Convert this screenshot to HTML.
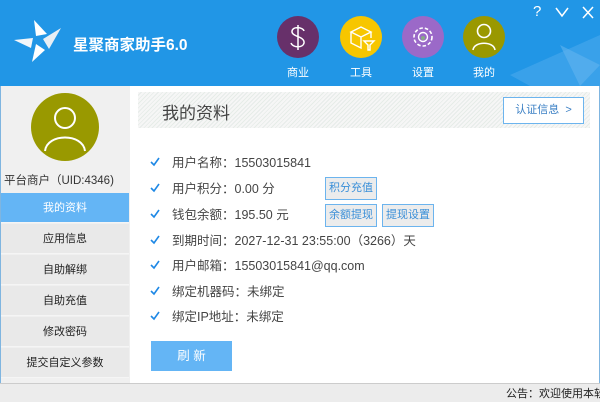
<!DOCTYPE html>
<html><head><meta charset="utf-8"><style>
*{margin:0;padding:0;box-sizing:border-box}
body{width:600px;height:402px;overflow:hidden;font-family:"Liberation Sans","Noto Sans CJK SC",sans-serif;background:#fff;position:relative}
.a{position:absolute}
.hdr{left:0;top:0;width:600px;height:86px;background:#2196e6}
.side{left:0;top:86px;width:130px;height:297px;background:#f0f0f0;border-left:1px solid #7fb5e0}
.mi{position:absolute;left:1px;width:128px;height:30px;line-height:30px;text-align:center;font-size:11px;color:#222;background:#e9e9e9;border-bottom:1px solid #f5f5f5}
.row{position:absolute;left:172px;font-size:12.5px;color:#444;height:20px;line-height:20px}
.ck{position:absolute;left:150px;width:10px;height:10px}
.btn{position:absolute;height:23px;line-height:21px;font-size:11px;color:#3a8fd8;border:1px solid #6cb4ee;background:#ececec;text-align:center}
.ic{position:absolute;top:16px;width:42px;height:42px;border-radius:50%}
.lb{position:absolute;top:64px;font-size:11px;color:#fff;width:50px;text-align:center}
</style></head><body>
<div class="a hdr"></div>
<svg class="a" style="left:500px;top:25px" width="100" height="61"><polygon points="10,50 100,10 100,61 30,61" fill="#4aa8ec" opacity=".6"/><polygon points="60,20 100,40 80,61" fill="#62b4ef" opacity=".6"/></svg>
<svg class="a" style="left:12px;top:18px" width="52" height="46"><polygon points="22,2 35,16 24,18" fill="#fff"/><polygon points="49,10 37,31 31,21" fill="#e8eef4"/><polygon points="20,44 24,26 33,32" fill="#fff"/><polygon points="2,22 21,20 19,30" fill="#f2f6fa"/></svg>
<div class="a" style="left:73px;top:33px;color:#fff;font-size:15.5px;font-weight:bold">星聚商家助手6.0</div>
<div class="ic" style="left:277px;background:#67306a"></div>
<svg class="a" style="left:277px;top:16px" width="42" height="42" fill="none" stroke="#fff" stroke-width="1.5"><path d="M27 15 C26 11 16 10 15 15 C14 21 28 20 27 27 C26 32 16 32 14 27 M21 9 V34"/></svg>
<div class="ic" style="left:340px;background:#f7c600"></div>
<svg class="a" style="left:348px;top:24px" width="28" height="28" fill="none" stroke="#fff" stroke-width="1.4"><path d="M3 8 L13 3 L23 8 L13 13 Z M3 8 V19 L13 24 V13 M23 8 V14"/><path d="M16 17 H26 L22 21 V26 H20 V21 Z"/></svg>
<div class="ic" style="left:402px;background:#9b69c8"></div>
<svg class="a" style="left:409px;top:23px" width="28" height="28"><circle cx="14" cy="14" r="9" fill="none" stroke="#fff" stroke-width="1.6" stroke-dasharray="3.5 2"/><circle cx="14" cy="14" r="4.5" fill="none" stroke="#fff" stroke-width="1.4"/><circle cx="14" cy="15" r="2" fill="#8a8"/></svg>
<div class="ic" style="left:463px;background:#9a9800"></div>
<svg class="a" style="left:470px;top:21px" width="28" height="32" fill="none" stroke="#fff" stroke-width="1.6"><circle cx="14" cy="10" r="6.5"/><path d="M3 29 C4 20 24 20 25 29"/></svg>
<div class="lb" style="left:273px">商业</div><div class="lb" style="left:336px">工具</div><div class="lb" style="left:398px">设置</div><div class="lb" style="left:459px">我的</div>
<div class="a" style="left:533px;top:3px;color:#fff;font-size:15px">?</div>
<svg class="a" style="left:554px;top:6px" width="44" height="14" stroke="#fff" stroke-width="1.5" fill="none"><path d="M2 2 L8 10 L14 2"/><path d="M29 1 L39 12 M39 1 L29 12"/></svg>
<div class="a side"></div>
<div class="a" style="left:31px;top:93px;width:68px;height:68px;border-radius:50%;background:#999900"></div>
<svg class="a" style="left:31px;top:93px" width="68" height="68" fill="none" stroke="#fff" stroke-width="2"><circle cx="34" cy="25" r="10"/><path d="M14 58 C16 40 52 40 54 58"/></svg>
<div class="a" style="left:4px;top:172px;font-size:11.5px;color:#333">平台商户（UID:4346)</div>
<div class="mi" style="top:193px;background:#64b5f5;color:#fff">我的资料</div>
<div class="mi" style="top:224px">应用信息</div>
<div class="mi" style="top:255px">自助解绑</div>
<div class="mi" style="top:286px">自助充值</div>
<div class="mi" style="top:317px">修改密码</div>
<div class="mi" style="top:348px">提交自定义参数</div>
<div class="a" style="left:138px;top:92px;width:452px;height:36px;background:repeating-linear-gradient(135deg,#f6f6f6 0 2px,#e6ece8 2px 3px)"></div>
<div class="a" style="left:162px;top:99px;font-size:17px;color:#444">我的资料</div>
<div class="a" style="left:503px;top:97px;width:81px;height:27px;background:#fff;border:1px solid #6cb4ee;font-size:11px;color:#3a7fc4;line-height:25px;text-align:center">认证信息 &nbsp;&gt;</div>
<svg class="a" style="left:0;top:0" width="170" height="330" fill="none" stroke="#1e88e5" stroke-width="1.6"><path d="M151 162 L154 165 L159 158"/><path d="M151 188 L154 191 L159 184"/><path d="M151 214 L154 217 L159 210"/><path d="M151 240 L154 243 L159 236"/><path d="M151 265 L154 268 L159 261"/><path d="M151 291 L154 294 L159 287"/><path d="M151 316 L154 319 L159 312"/></svg>
<div class="row" style="top:153px">用户名称：15503015841</div>
<div class="row" style="top:179px">用户积分：0.00 分</div>
<div class="row" style="top:205px">钱包余额：195.50 元</div>
<div class="row" style="top:231px">到期时间：2027-12-31 23:55:00（3266）天</div>
<div class="row" style="top:256px">用户邮箱：15503015841@qq.com</div>
<div class="row" style="top:282px">绑定机器码：未绑定</div>
<div class="row" style="top:307px">绑定IP地址：未绑定</div>
<div class="btn" style="left:325px;top:177px;width:52px">积分充值</div>
<div class="btn" style="left:325px;top:204px;width:52px">余额提现</div>
<div class="btn" style="left:382px;top:204px;width:52px">提现设置</div>
<div class="a" style="left:151px;top:341px;width:81px;height:30px;background:#64b5f5;color:#fff;font-size:12.5px;line-height:30px;text-align:center">刷 新</div>
<div class="a" style="left:0;top:383px;width:600px;height:19px;background:#ececec;border-top:1px solid #ccc"></div>
<div class="a" style="left:506px;top:385px;font-size:11px;color:#222;white-space:nowrap">公告：欢迎使用本软</div>
<div class="a" style="left:599px;top:86px;width:1px;height:297px;background:#7fb5e0"></div>
</body></html>
